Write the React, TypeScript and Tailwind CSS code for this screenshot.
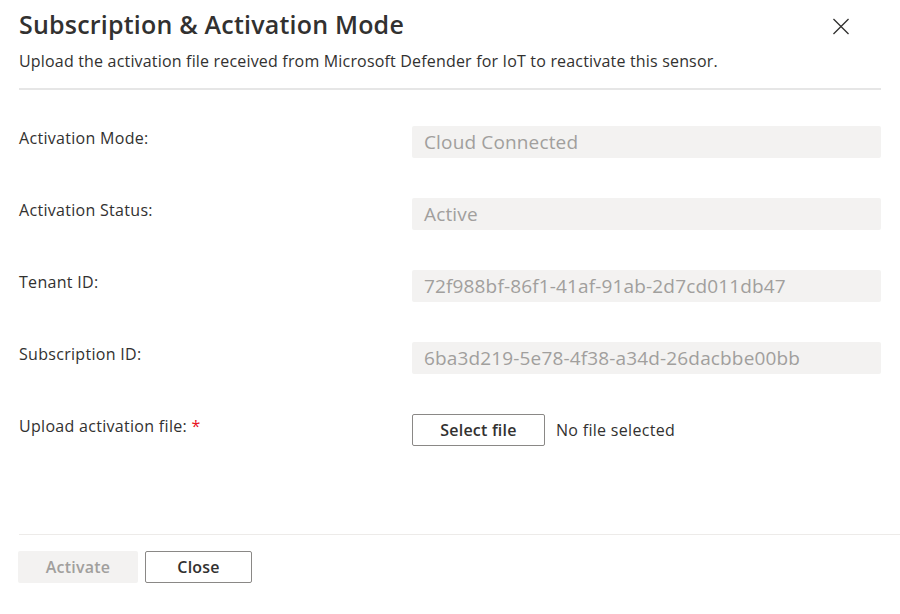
import React from "react";

const rows = [
  { label: "Activation Mode:", value: "Cloud Connected" },
  { label: "Activation Status:", value: "Active" },
  { label: "Tenant ID:", value: "72f988bf-86f1-41af-91ab-2d7cd011db47" },
  { label: "Subscription ID:", value: "6ba3d219-5e78-4f38-a34d-26dacbbe00bb" },
];

export default function App() {
  return (
    <div
      className="w-[900px] h-[614px] bg-white text-[#323130] flex flex-col overflow-hidden"
      style={{ fontFamily: '"Open Sans", "Noto Sans", sans-serif' }}
    >
      <div className="pl-[19px] pr-[19px]">
        <div className="flex items-start justify-between pt-[8px]">
          <h1 className="text-[25px] leading-[32px] font-semibold tracking-[0.2px]">
            Subscription &amp; Activation Mode
          </h1>
          <button className="mr-[32px] mt-[10px] w-[16px] h-[16px] flex items-center justify-center">
            <svg width="17" height="17" viewBox="0 0 17 17">
              <path d="M0.5 0.5 L16.5 16.5 M16.5 0.5 L0.5 16.5" stroke="#323130" strokeWidth="1.4" fill="none" />
            </svg>
          </button>
        </div>
        <p className="mt-[10px] text-[16px] leading-[22px] tracking-[0.18px]">
          Upload the activation file received from Microsoft Defender for IoT to reactivate this sensor.
        </p>
        <div className="mt-[16px] h-[2px] bg-[#e6e6e6]" />
      </div>

      <div className="pl-[19px] pr-[19px] mt-[36px] flex flex-col gap-[40px]">
        {rows.map((r) => (
          <div key={r.label} className="flex items-start h-[32px]">
            <div className="w-[393px] pt-[1px] text-[16px] leading-[22px] tracking-[0.3px]">{r.label}</div>
            <div className="flex-1 h-[32px] bg-[#f3f2f1] rounded-[2px] px-[12px] flex items-center text-[19px] text-[#a19f9d] tracking-[0.15px]">
              {r.value}
            </div>
          </div>
        ))}
        <div className="flex items-start h-[32px]">
          <div className="w-[393px] pt-[1px] text-[16px] leading-[22px] tracking-[0.3px]">
            Upload activation file: <span className="text-[#e81123]">*</span>
          </div>
          <div className="flex items-center">
            <button className="w-[133px] h-[32px] border border-[#8a8886] rounded-[2px] text-[16px] font-semibold tracking-[0.2px] bg-white">
              Select file
            </button>
            <span className="ml-[11px] text-[16px] tracking-[0.3px]">No file selected</span>
          </div>
        </div>
      </div>

      <div className="mt-[88px] ml-[19px] h-[1px] bg-[#edebe9]" />

      <div className="pl-[18px] mt-[16px] flex gap-[7px]">
        <button className="w-[120px] h-[32px] bg-[#f3f2f1] rounded-[2px] text-[16px] font-semibold text-[#a19f9d] tracking-[0.2px]">
          Activate
        </button>
        <button className="w-[107px] h-[32px] border border-[#8a8886] rounded-[2px] text-[16px] font-semibold tracking-[0.2px] bg-white">
          Close
        </button>
      </div>
    </div>
  );
}
